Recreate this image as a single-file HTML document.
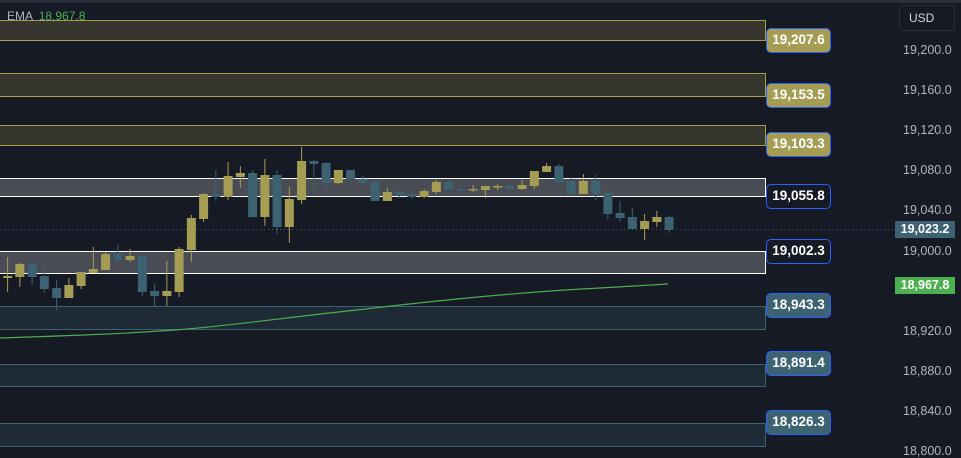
<!DOCTYPE html>
<html><head><meta charset="utf-8"><style>
html,body{margin:0;padding:0;background:#161a25;}
body{width:961px;height:456px;overflow:hidden;position:relative;font-family:"Liberation Sans",sans-serif;}
.top{position:absolute;left:0;top:0;width:961px;height:3px;background:#2a2e39;}
.z{position:absolute;left:0;width:766px;box-sizing:border-box;}
.zy{background:#36362e;border:1px solid #a89e50;border-left:none;}
.zw{background:#4a4c55;border:1.5px solid #fff;border-left:none;}
.zb{background:#1e2b37;border:1px solid #3d6272;border-left:none;}
.lb{position:absolute;left:766px;width:65px;height:25px;box-sizing:border-box;border:1.5px solid #2962ff;border-radius:5px;color:#fff;font-weight:bold;font-size:13.5px;line-height:22px;text-align:center;}
.ly{background:#a69d54;}
.ld{background:#161a25;}
.lt{background:#3d6272;}
.ax{position:absolute;left:903px;width:58px;font-size:12.5px;color:#b2b5be;text-align:left;}
.usd{position:absolute;left:899px;top:5px;width:56px;height:26px;box-sizing:border-box;border:1px solid #2a2e39;border-radius:4px;color:#d1d4dc;font-size:12px;line-height:24px;padding-left:9px;}
</style></head><body>
<div class="top"></div>
<div class="z zy" style="top:20px;height:21px"></div>
<div class="z zy" style="top:73px;height:24px"></div>
<div class="z zy" style="top:125px;height:21px"></div>
<div class="z zw" style="top:178px;height:19px"></div>
<div class="z zw" style="top:251px;height:23px"></div>
<div class="z zb" style="top:306px;height:24px"></div>
<div class="z zb" style="top:364px;height:23px"></div>
<div class="z zb" style="top:423px;height:24px"></div>
<svg id="s" width="961" height="456" style="position:absolute;left:0;top:0">
<line x1="0" y1="229.5" x2="895" y2="229.5" stroke="#3d6272" stroke-dasharray="1 3" stroke-width="1"/>
<path d="M0 338 C60 336 120 334 175 330 C230 326 280 318 357 310 C440 300 520 292 600 288 L668 284" fill="none" stroke="#4caf50" stroke-width="1.2"/>
<g id="c"></g>
</svg>
<div style="position:absolute;left:7px;top:9px;font-size:12px;color:#b2b5be">EMA <span style="color:#4caf50;margin-left:3px">18,967.8</span></div>
<div class="lb ly" style="top:28px">19,207.6</div>
<div class="lb ly" style="top:83px">19,153.5</div>
<div class="lb ly" style="top:132px">19,103.3</div>
<div class="lb ld" style="top:184px">19,055.8</div>
<div class="lb ld" style="top:239px">19,002.3</div>
<div class="lb lt" style="top:293px">18,943.3</div>
<div class="lb lt" style="top:351px">18,891.4</div>
<div class="lb lt" style="top:410px">18,826.3</div>
<div class="usd">USD</div>
<div class="ax" style="top:43px">19,200.0</div>
<div class="ax" style="top:83px">19,160.0</div>
<div class="ax" style="top:123px">19,120.0</div>
<div class="ax" style="top:163px">19,080.0</div>
<div class="ax" style="top:203px">19,040.0</div>
<div class="ax" style="top:244px">19,000.0</div>
<div class="ax" style="top:324px">18,920.0</div>
<div class="ax" style="top:364px">18,880.0</div>
<div class="ax" style="top:404px">18,840.0</div>
<div class="ax" style="top:444px">18,800.0</div>
<div style="position:absolute;left:895px;top:221px;width:60px;height:17px;background:#3d6272;color:#fff;font-size:12.5px;font-weight:bold;line-height:17px;text-align:center">19,023.2</div>
<div style="position:absolute;left:895px;top:277px;width:60px;height:17px;background:#4caf50;color:#fff;font-size:12.5px;font-weight:bold;line-height:17px;text-align:center">18,967.8</div>
<script>
var d=[
['y',276,278,257,292],['y',264,277,263,287],['b',264,277,263,285],['b',276,289,268,293],['b',288,298,280,310],
['y',285,298,278,298],['y',272,286,272,289],['y',269,273,247,273],['y',254,270,252,270],['b',254,260,245,262],
['y',256,260,249,262],['b',256,292,255,296],['b',291,296,284,306],['y',291,296,261,306],['y',249,292,247,297],
['y',218,250,215,262],['y',194,219,193,222],['b',194,197,170,201],['y',176,197,162,200],['y',173,177,166,188],
['b',173,217,170,217],['y',175,217,159,226],['b',175,227,170,234],['y',199,227,187,243],['y',161,200,147,204],
['b',161,164,160,192],['b',163,183,162,194],['y',170,183,170,184],['b',170,179,170,184],['b',179,183,176,184],
['b',182,201,181,201],['y',192,201,188,201],['b',192,195,189,198],['b',194,197,191,199],['y',191,197,189,198],
['y',182,192,180,194],['b',182,190,182,190],['b',189,190,186,193],['y',189,190,185,192],['y',186,190,186,198],
['y',186,187,184,190],['b',186,189,184,190],['y',185,189,180,190],['y',171,186,171,189],['y',166,172,163,172],
['b',166,182,164,183],['b',181,194,177,194],['y',181,194,174,194],['b',181,194,175,200],['b',193,214,188,219],
['b',213,218,201,221],['b',217,229,208,229],['y',221,229,214,240],['y',217,222,211,227],['b',217,230,216,233]];
var s='';
for(var i=0;i<d.length;i++){var c=d[i],col=c[0]=='y'?'#a69d54':'#3d6272',cx=7.6+12.25*i;
s+='<line x1="'+cx+'" x2="'+cx+'" y1="'+c[3]+'" y2="'+c[4]+'" stroke="'+col+'" stroke-width="1"/>';
s+='<rect x="'+(cx-4.5)+'" y="'+c[1]+'" width="9" height="'+Math.max(1.5,c[2]-c[1])+'" fill="'+col+'"/>';}
document.getElementById('c').innerHTML=s;
</script>
</body></html>
